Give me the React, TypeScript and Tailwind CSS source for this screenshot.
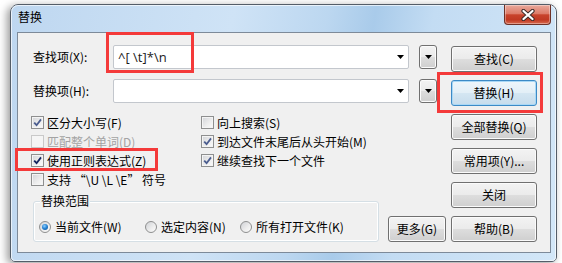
import React from "react";

const BTN =
  "h-[26px] rounded-[3px] border border-[#707070] bg-[linear-gradient(#f3f3f3_0%,#ebebeb_48%,#dddddd_52%,#cfcfcf_100%)] shadow-[inset_0_0_0_1px_#fbfbfb] flex items-center justify-center text-black";

function Tri() {
  return (
    <svg width="7" height="4" viewBox="0 0 7 4">
      <path d="M0 0 H7 L3.5 4 Z" fill="#000" />
    </svg>
  );
}

function Check({
  checked,
  disabled,
  dark,
  label,
}: {
  checked?: boolean;
  disabled?: boolean;
  dark?: boolean;
  label: string;
}) {
  return (
    <div className="flex items-center h-[19px] gap-[3px] whitespace-nowrap">
      <span
        className={
          disabled
            ? "w-[13px] h-[13px] border border-[#c9c9c9] bg-[#f5f5f5] flex items-center justify-center"
            : "w-[13px] h-[13px] border border-[#8e8f8f] bg-[linear-gradient(135deg,#d2d4d8_0%,#eeeeee_60%,#fbfbfb_100%)] shadow-[inset_0_0_0_1px_#f4f4f4] flex items-center justify-center"
        }
      >
        {checked && (
          <svg width="9" height="9" viewBox="0 0 9 9">
            <path
              d="M1.2 4.6 L3.6 7.2 L8 1.4"
              stroke={dark ? "#13245f" : "#4b5d8f"}
              strokeWidth="1.8"
              fill="none"
            />
          </svg>
        )}
      </span>
      <span className={disabled ? "text-[#a3a3a3]" : "text-black"}>{label}</span>
    </div>
  );
}

function Radio({ checked, label }: { checked?: boolean; label: string }) {
  return (
    <div className="flex items-center gap-[4px] whitespace-nowrap">
      <span className="w-[12px] h-[12px] rounded-full border border-[#8e8f8f] bg-[linear-gradient(135deg,#d0d2d6_0%,#eeeeee_60%,#fcfcfc_100%)] flex items-center justify-center">
        {checked && (
          <span className="w-[6px] h-[6px] rounded-full bg-[radial-gradient(circle_at_40%_35%,#8fd0ff_0%,#2a86d6_45%,#0b4a8c_100%)]" />
        )}
      </span>
      <span>{label}</span>
    </div>
  );
}

export default function App() {
  return (
    <div className="relative w-[562px] h-[263px] overflow-hidden bg-white pt-[4px] pl-[10px] font-['Noto_Sans_CJK_SC','Noto_Sans',sans-serif] text-[12px] leading-[16px] text-black">
      {/* window */}
      <div className="w-[547px] h-[258px] rounded-t-[8px] rounded-b-[5px] border border-[#545d68] shadow-[-3px_2px_9px_rgba(0,0,0,0.4)] bg-[linear-gradient(100deg,#bed7f0_0%,#cfe3f6_38%,#bcd7f0_54%,#a9cbea_62%,#c3dcf3_72%,#d3e7f8_100%)] flex flex-col">
        <div className="flex-1 rounded-t-[7px] rounded-b-[4px] shadow-[inset_0_0_0_1px_rgba(255,255,255,0.65)] flex flex-col">
          {/* title bar */}
          <div className="h-[27px] flex justify-between items-start">
            <span className="ml-[7px] mt-[4px] text-[12px] text-black">替换</span>
            <div className="mr-[5px] w-[47px] h-[20px] rounded-b-[4px] border border-t-0 border-[#6e3127] bg-[linear-gradient(#eaa99c_0%,#dd7c69_45%,#c8432c_52%,#c03923_78%,#d96b4f_100%)] shadow-[inset_0_0_0_1px_rgba(255,255,255,0.35)] flex items-center justify-center">
              <svg width="14" height="12" viewBox="0 0 14 12">
                <path d="M2.5 2 L11.5 10 M11.5 2 L2.5 10" stroke="#3b2a28" strokeWidth="4.2" strokeLinecap="round" />
                <path d="M2.5 2 L11.5 10 M11.5 2 L2.5 10" stroke="#ffffff" strokeWidth="2.3" strokeLinecap="round" />
              </svg>
            </div>
          </div>
          {/* client */}
          <div className="ml-[6px] mr-[5px] w-[534px] h-[221px] border border-[#7d8a99] bg-[#f0f0f0] flex pl-[13px] pt-[12px]">
            {/* left column */}
            <div className="w-[406px] shrink-0 flex flex-col">
              <div className="flex items-center h-[24px]">
                <span className="ml-[2px] w-[80px]">查找项(X):</span>
                <div className="w-[296px] h-[24px] rounded-[2px] border border-[#c3c7cd] bg-white flex items-center">
                  <span className="flex-1 pl-[4px] font-['Open_Sans',sans-serif] text-[13px] leading-[16px] text-[#1a1a1a]">
                    {"^[ \\t]*\\n"}
                  </span>
                  <span className="mr-[4px] flex">
                    <Tri />
                  </span>
                </div>
                <div className="ml-[10px] w-[18px] h-[24px] rounded-[3px] border border-[#707070] bg-[linear-gradient(#f3f3f3_0%,#ebebeb_48%,#dddddd_52%,#cfcfcf_100%)] shadow-[inset_0_0_0_1px_#fbfbfb] flex items-center justify-center">
                  <Tri />
                </div>
              </div>
              <div className="flex items-center h-[24px] mt-[10px]">
                <span className="ml-[2px] w-[80px]">替换项(H):</span>
                <div className="w-[296px] h-[24px] rounded-[2px] border border-[#c3c7cd] bg-white flex items-center">
                  <span className="flex-1" />
                  <span className="mr-[4px] flex">
                    <Tri />
                  </span>
                </div>
                <div className="ml-[10px] w-[18px] h-[24px] rounded-[3px] border border-[#707070] bg-[linear-gradient(#f3f3f3_0%,#ebebeb_48%,#dddddd_52%,#cfcfcf_100%)] shadow-[inset_0_0_0_1px_#fbfbfb] flex items-center justify-center">
                  <Tri />
                </div>
              </div>
              <div className="mt-[10px] grid grid-cols-[170px_1fr]">
                <Check checked label="区分大小写(F)" />
                <Check label="向上搜索(S)" />
                <Check disabled label="匹配整个单词(D)" />
                <Check checked label="到达文件末尾后从头开始(M)" />
                <Check checked dark label="使用正则表达式(Z)" />
                <Check checked label="继续查找下一个文件" />
                <Check label={"支持 “\\U \\L \\E” 符号"} />
              </div>
              <div className="mt-[12px] flex items-end">
                <div className="relative shrink-0 ml-[2px] w-[346px] h-[41px] rounded-[3px] border border-[#d5dfe5] shadow-[inset_0_0_0_1px_#ffffff] flex items-center pt-[10px] pl-[5px]">
                  <span className="absolute left-[6px] -top-[9px] bg-[#f0f0f0] px-[1px]">替换范围</span>
                  <div className="w-[106px]">
                    <Radio checked label="当前文件(W)" />
                  </div>
                  <div className="w-[95px]">
                    <Radio label="选定内容(N)" />
                  </div>
                  <Radio label="所有打开文件(K)" />
                </div>
                <div className={"shrink-0 ml-[9px] w-[58px] " + BTN}>更多(G)</div>
              </div>
            </div>
            {/* button column */}
            <div className="ml-[14px] w-[86px] shrink-0 pt-[1px] flex flex-col gap-[8px]">
              <div className={BTN}>查找(C)</div>
              <div className="h-[26px] rounded-[3px] border border-[#3c8ac6] bg-[linear-gradient(#eef6fb_0%,#e3eff7_48%,#d4e6f2_52%,#c6dcec_100%)] shadow-[inset_0_0_0_1px_#a9d8f6] flex items-center justify-center">
                替换(H)
              </div>
              <div className={BTN}>全部替换(Q)</div>
              <div className={BTN}>常用项(Y)...</div>
              <div className={BTN}>关闭</div>
              <div className={BTN}>帮助(B)</div>
            </div>
          </div>
        </div>
      </div>

      {/* red annotation boxes */}
      <div className="absolute left-[106px] top-[32px] w-[88px] h-[41px] border-[3px] border-[#f43a3a]" />
      <div className="absolute left-[437px] top-[72px] w-[106px] h-[41px] border-[3px] border-[#f43a3a]" />
      <div className="absolute left-[15px] top-[148px] w-[143px] h-[23px] border-[3px] border-[#f43a3a]" />
    </div>
  );
}
